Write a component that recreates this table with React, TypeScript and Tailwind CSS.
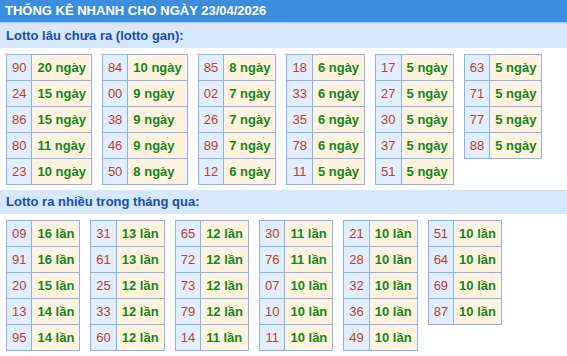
import React from "react";

type Row = [string, string];

const gan: Row[][] = [
  [["90", "20 ngày"], ["24", "15 ngày"], ["86", "15 ngày"], ["80", "11 ngày"], ["23", "10 ngày"]],
  [["84", "10 ngày"], ["00", "9 ngày"], ["38", "9 ngày"], ["46", "9 ngày"], ["50", "8 ngày"]],
  [["85", "8 ngày"], ["02", "7 ngày"], ["26", "7 ngày"], ["89", "7 ngày"], ["12", "6 ngày"]],
  [["18", "6 ngày"], ["33", "6 ngày"], ["35", "6 ngày"], ["78", "6 ngày"], ["11", "5 ngày"]],
  [["17", "5 ngày"], ["27", "5 ngày"], ["30", "5 ngày"], ["37", "5 ngày"], ["51", "5 ngày"]],
  [["63", "5 ngày"], ["71", "5 ngày"], ["77", "5 ngày"], ["88", "5 ngày"]],
];

const nhieu: Row[][] = [
  [["09", "16 lần"], ["91", "16 lần"], ["20", "15 lần"], ["13", "14 lần"], ["95", "14 lần"]],
  [["31", "13 lần"], ["61", "13 lần"], ["25", "12 lần"], ["33", "12 lần"], ["60", "12 lần"]],
  [["65", "12 lần"], ["72", "12 lần"], ["73", "12 lần"], ["79", "12 lần"], ["14", "11 lần"]],
  [["30", "11 lần"], ["76", "11 lần"], ["07", "10 lần"], ["10", "10 lần"], ["11", "10 lần"]],
  [["21", "10 lần"], ["28", "10 lần"], ["32", "10 lần"], ["36", "10 lần"], ["49", "10 lần"]],
  [["51", "10 lần"], ["64", "10 lần"], ["69", "10 lần"], ["87", "10 lần"]],
];

function Block({ rows }: { rows: Row[] }) {
  return (
    <div className="inline-grid grid-cols-[auto_auto] border-t border-l border-[#8bb1f3]">
      {rows.map(([n, v], i) => (
        <React.Fragment key={i}>
          <div className="h-[26px] px-[5px] flex items-center justify-center bg-[#e1eefd] border-r border-b border-[#8bb1f3] text-[#b8432b] text-[13px]">
            {n}
          </div>
          <div className="h-[26px] px-[5px] flex items-center bg-[#fff3e0] border-r border-b border-[#8bb1f3] text-[#15861a] text-[13px] font-bold">
            {v}
          </div>
        </React.Fragment>
      ))}
    </div>
  );
}

export default function App() {
  return (
    <div
      className="w-[567px] h-[356px] bg-white overflow-hidden"
      style={{ fontFamily: '"Liberation Sans", Arial, sans-serif' }}
    >
      <div className="h-[22px] bg-[#3c8ddd] text-white text-[13px] font-bold pl-[5px] leading-[22px]">
        THỐNG KÊ NHANH CHO NGÀY 23/04/2026
      </div>
      <div className="h-[1px] bg-[#a4c8ef]" />
      <div className="h-[25px] bg-[#d4e7fb] text-[#1d4ea3] text-[13px] font-bold pl-[6px] leading-[25px]">
        Lotto lâu chưa ra (lotto gan):
      </div>
      <div className="mt-[6px] pl-[6px] flex items-start gap-[10px]">
        {gan.map((b, i) => (
          <Block key={i} rows={b} />
        ))}
      </div>
      <div className="mt-[5px] h-[24px] bg-[#d4e7fb] text-[#1d4ea3] text-[13px] font-bold pl-[6px] leading-[24px]">
        Lotto ra nhiều trong tháng qua:
      </div>
      <div className="mt-[6px] pl-[6px] flex items-start gap-[10px]">
        {nhieu.map((b, i) => (
          <Block key={i} rows={b} />
        ))}
      </div>
    </div>
  );
}
